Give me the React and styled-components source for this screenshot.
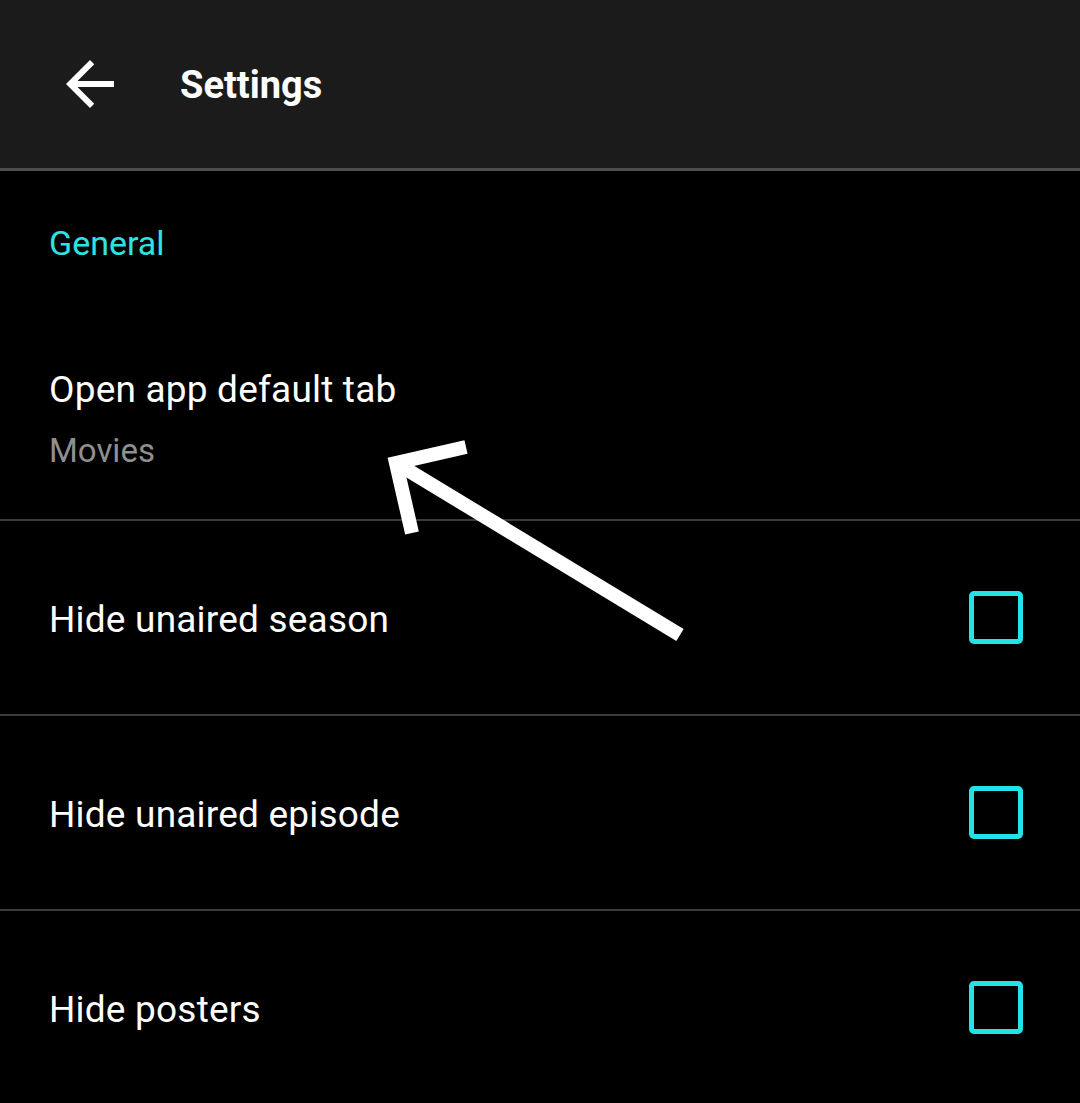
import React from "react";
import styled, { createGlobalStyle } from "styled-components";

const GlobalStyle = createGlobalStyle`
  html, body {
    margin: 0;
    padding: 0;
    background: #000;
  }
  body {
    font-family: Roboto, "Noto Sans", "Liberation Sans", sans-serif;
    -webkit-font-smoothing: antialiased;
  }
`;

const Screen = styled.div`
  position: relative;
  width: 1080px;
  height: 1103px;
  overflow: hidden;
  background: #000;
  color: #fff;
`;

const TopBar = styled.header`
  height: 168px;
  background: #1b1b1b;
  border-bottom: 3px solid #4e4e4e;
  display: flex;
  align-items: center;
`;

const BackButton = styled.button`
  width: 72px;
  height: 72px;
  margin-left: 54px;
  margin-top: -1px;
  padding: 0;
  border: 0;
  background: none;
  display: flex;
  align-items: center;
  justify-content: center;
  svg {
    display: block;
  }
`;

const Title = styled.h1`
  margin: 2px 0 0 54px;
  font-size: 38px;
  font-weight: 700;
  line-height: 44px;
  color: #fff;
`;

const Category = styled.div`
  padding: 52px 49px 0;
  height: 78px;
  font-size: 34px;
  line-height: 40px;
  color: #2ee3e3;
`;

const Item = styled.div`
  display: flex;
  align-items: center;
  justify-content: space-between;
  padding: 0 57px 0 49px;
  height: ${(p) => p.$height}px;
  border-bottom: 2px solid #3b3b3b;
  box-sizing: content-box;
`;

const TextBlock = styled.div`
  display: flex;
  flex-direction: column;
  gap: ${(p) => p.$gap || 0}px;
  padding-top: ${(p) => p.$top || 0}px;
  align-self: ${(p) => (p.$top > 10 ? "flex-start" : "center")};
`;

const ItemTitle = styled.div`
  font-size: 37px;
  line-height: 44px;
  letter-spacing: 0.2px;
  color: #fff;
`;

const ItemSummary = styled.div`
  font-size: 33px;
  line-height: 39px;
  color: #8f8f8f;
`;

const CheckBox = styled.span`
  width: 44px;
  height: 43px;
  border: 5px solid #23e3e6;
  border-radius: 5px;
  display: block;
`;

const Annotation = styled.svg`
  position: absolute;
  left: 0;
  top: 0;
  pointer-events: none;
`;

function Row({ title, checked }) {
  return (
    <Item $height={193}>
      <TextBlock $top={5}>
        <ItemTitle>{title}</ItemTitle>
      </TextBlock>
      <CheckBox aria-checked={checked} />
    </Item>
  );
}

export default function App() {
  return (
    <Screen>
      <GlobalStyle />
      <TopBar>
        <BackButton aria-label="Back">
          <svg width="72" height="72" viewBox="0 0 24 24" fill="#fff">
            <path d="M20 11H7.83l5.59-5.59L12 4l-8 8 8 8 1.41-1.41L7.83 13H20v-2z" />
          </svg>
        </BackButton>
        <Title>Settings</Title>
      </TopBar>
      <Category>General</Category>
      <Item $height={218}>
        <TextBlock $top={67} $gap={19}>
          <ItemTitle>Open app default tab</ItemTitle>
          <ItemSummary>Movies</ItemSummary>
        </TextBlock>
      </Item>
      <Row title="Hide unaired season" />
      <Row title="Hide unaired episode" />
      <Row title="Hide posters" />
      <Annotation width="1080" height="1103">
        <g stroke="#fff" strokeWidth="14" fill="none" strokeLinejoin="miter">
          <line x1="680" y1="635" x2="396" y2="463" />
          <polyline points="466,447 396,463 412,533" />
        </g>
      </Annotation>
    </Screen>
  );
}
